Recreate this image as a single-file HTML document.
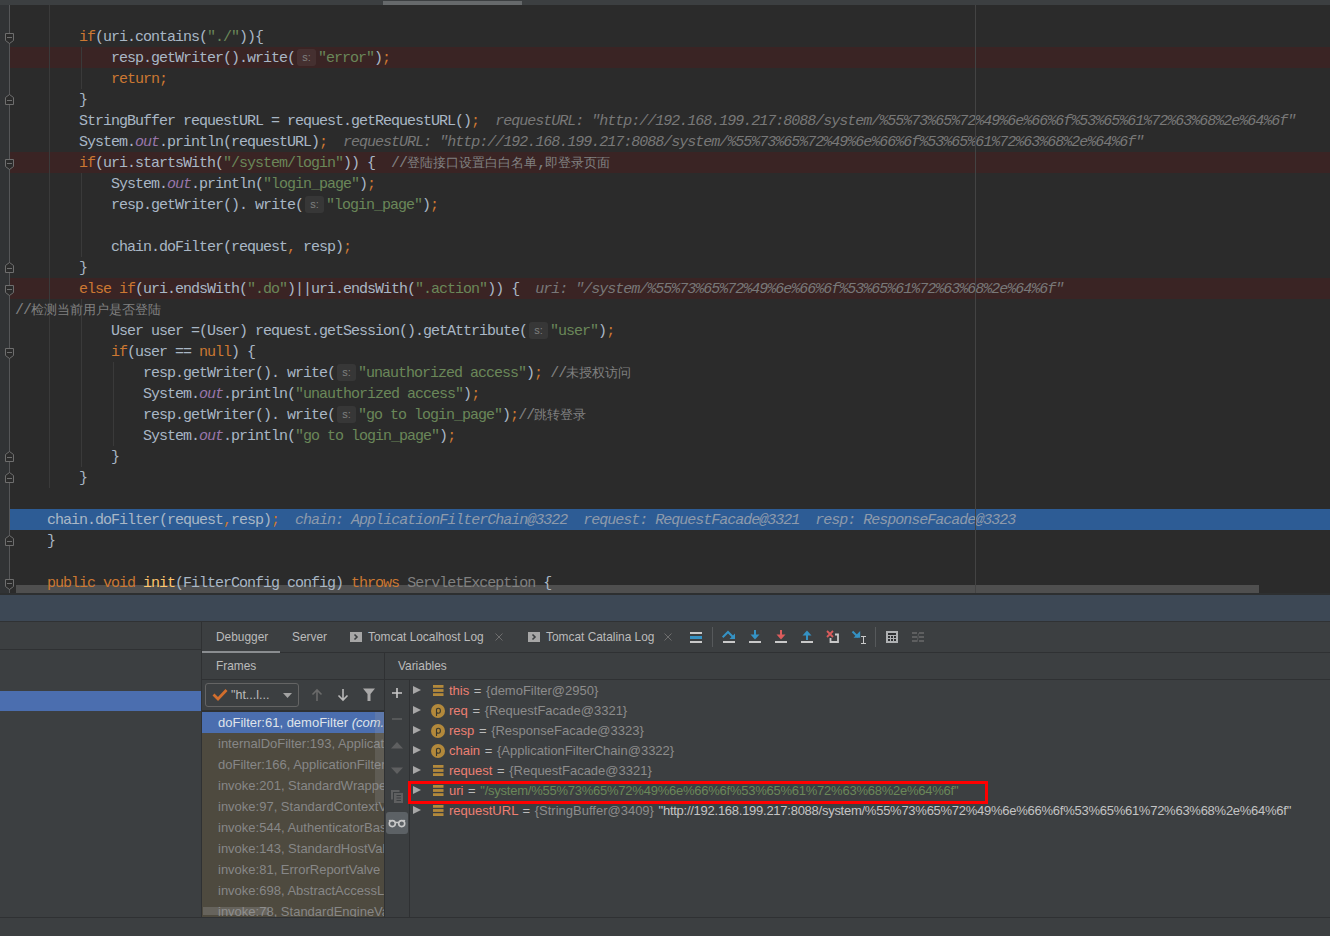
<!DOCTYPE html>
<html><head><meta charset="utf-8"><title>IDE Debugger</title><style>
*{margin:0;padding:0;box-sizing:border-box}
html,body{width:1330px;height:936px;overflow:hidden;background:#3c3f41}
body{position:relative;font-family:"Liberation Sans",sans-serif}
.abs{position:absolute}
#topbar{position:absolute;left:0;top:0;width:1330px;height:5px;background:#3c3f41}
#topthumb{position:absolute;left:383px;top:1px;width:139px;height:4px;background:#66696b}
#editor{position:absolute;left:0;top:5px;width:1330px;height:589px;background:#2b2b2b;overflow:hidden}
#code{position:absolute;left:0;top:-5px;width:1330px;height:600px}
#gutter{position:absolute;left:0;top:5px;width:9px;height:589px;background:#313335}
#gutline{position:absolute;left:9px;top:5px;width:1px;height:589px;background:#555658}
.fold{position:absolute;left:0}
#margin{position:absolute;left:975px;top:5px;width:1px;height:589px;background:#434343}
.hl{position:absolute;left:10px;width:1320px;height:21px}
.red{background:#3a2424}
.blue{background:#2d5c95}
.guide{position:absolute;width:1px;background:#3a3a3a}
.ln{position:absolute;left:15px;height:21px;line-height:21px;white-space:pre;font-family:"Liberation Mono",monospace;font-size:15px;letter-spacing:-1px;color:#a9b7c6}
.ln span{}
.k{color:#cc7832}
.s{color:#6a8759}
.d{color:#a9b7c6}
.c{color:#808080}
.cjkc{color:#808080;font-size:13px;letter-spacing:0}
.f{color:#9876aa;font-style:italic}
.m{color:#ffc66d}
.g{color:#808080}
.iv{color:#787878;font-style:italic}
.ivb{color:#8d9aab;font-style:italic}
.hint{display:inline-block;width:23px;height:21px;position:relative;vertical-align:top}
.hint b{position:absolute;left:2px;top:1px;width:19px;height:17px;border-radius:3px;background:rgba(255,255,255,0.06);font-weight:normal;font-family:"Liberation Sans",sans-serif;font-size:11px;letter-spacing:0;line-height:17px;text-align:center;color:#7f7f7f}
#hscroll{position:absolute;left:16px;top:585px;width:1243px;height:8px;background:#4f4f4f}
#band{position:absolute;left:0;top:593px;width:1330px;height:2px;background:#2d2f30}
#band2{position:absolute;left:0;top:595px;width:1330px;height:26px;background:#3d4855}
#band3{position:absolute;left:0;top:621px;width:1330px;height:1px;background:#303234}
.hline{position:absolute;height:1px;background:#2f3133}
.vline{position:absolute;width:1px;background:#2f3133}
.ui{position:absolute;font-family:"Liberation Sans",sans-serif;font-size:11.9px;color:#bbbbbb;white-space:pre;line-height:16px}
.frame{position:absolute;left:16px;height:21px;line-height:21px;font-size:13px;color:#878787;white-space:pre;font-family:"Liberation Sans",sans-serif}
.var{position:absolute;left:449px;height:20px;line-height:20px;font-size:13px;word-spacing:1px;white-space:pre;font-family:"Liberation Sans",sans-serif;color:#bbbbbb}
.vn{color:#ec7f73}
.vv{color:#8c8c8c}
.vs{color:#6a8759;letter-spacing:-0.24px}
.vp{letter-spacing:-0.26px;color:#c4c4c4}
.tri{position:absolute;left:413px;width:0;height:0;border-left:8px solid #a7a7a7;border-top:4.5px solid transparent;border-bottom:4.5px solid transparent}
.fld{position:absolute;left:433px;width:10px;height:11px}
.pic{position:absolute;left:431px;width:14px;height:14px;border-radius:50%;background:#b38c3e;color:#2b2b2b;font-size:11px;line-height:13px;text-align:center;font-family:"Liberation Sans",sans-serif}

</style></head><body>
<div id="topbar"></div><div id="topthumb"></div>
<div id="editor"><div id="code">
<div id="hscroll"></div>
<div class="hl red" style="top:47px"></div>
<div class="hl red" style="top:152px"></div>
<div class="hl red" style="top:278px"></div>
<div class="hl blue" style="top:509px"></div>
<div class="guide" style="left:49px;top:5px;height:483px"></div>
<div class="guide" style="left:81px;top:47px;height:42px"></div>
<div class="guide" style="left:81px;top:173px;height:84px"></div>
<div class="guide" style="left:81px;top:299px;height:168px"></div>
<div class="guide" style="left:113px;top:362px;height:84px"></div>
<div class="ln" style="top:27px"><span class="d">        </span><span class="k">if</span><span class="d">(uri.contains(</span><span class="s">&quot;./&quot;</span><span class="d">)){</span></div>
<div class="ln" style="top:48px"><span class="d">            resp.getWriter().write(</span><span class="hint"><b>s:</b></span><span class="s">&quot;error&quot;</span><span class="d">)</span><span class="k">;</span></div>
<div class="ln" style="top:69px"><span class="d">            </span><span class="k">return;</span></div>
<div class="ln" style="top:90px"><span class="d">        }</span></div>
<div class="ln" style="top:111px"><span class="d">        StringBuffer requestURL = request.getRequestURL()</span><span class="k">;</span><span class="d">  </span><span class="iv">requestURL: &quot;http://192.168.199.217:8088/system/%55%73%65%72%49%6e%66%6f%53%65%61%72%63%68%2e%64%6f&quot;</span></div>
<div class="ln" style="top:132px"><span class="d">        System.</span><span class="f">out</span><span class="d">.println(requestURL)</span><span class="k">;</span><span class="d">  </span><span class="iv">requestURL: &quot;http://192.168.199.217:8088/system/%55%73%65%72%49%6e%66%6f%53%65%61%72%63%68%2e%64%6f&quot;</span></div>
<div class="ln" style="top:153px"><span class="d">        </span><span class="k">if</span><span class="d">(uri.startsWith(</span><span class="s">&quot;/system/login&quot;</span><span class="d">)) {  </span><span class="c">//</span><span class="cjkc">登陆接口设置白白名单</span><span class="c">,</span><span class="cjkc">即登录页面</span></div>
<div class="ln" style="top:174px"><span class="d">            System.</span><span class="f">out</span><span class="d">.println(</span><span class="s">&quot;login_page&quot;</span><span class="d">)</span><span class="k">;</span></div>
<div class="ln" style="top:195px"><span class="d">            resp.getWriter(). write(</span><span class="hint"><b>s:</b></span><span class="s">&quot;login_page&quot;</span><span class="d">)</span><span class="k">;</span></div>
<div class="ln" style="top:237px"><span class="d">            chain.doFilter(request</span><span class="k">,</span><span class="d"> resp)</span><span class="k">;</span></div>
<div class="ln" style="top:258px"><span class="d">        }</span></div>
<div class="ln" style="top:279px"><span class="d">        </span><span class="k">else if</span><span class="d">(uri.endsWith(</span><span class="s">&quot;.do&quot;</span><span class="d">)||uri.endsWith(</span><span class="s">&quot;.action&quot;</span><span class="d">)) {  </span><span class="iv">uri: &quot;/system/%55%73%65%72%49%6e%66%6f%53%65%61%72%63%68%2e%64%6f&quot;</span></div>
<div class="ln" style="top:300px"><span class="c">//</span><span class="cjkc">检测当前用户是否登陆</span></div>
<div class="ln" style="top:321px"><span class="d">            User user =(User) request.getSession().getAttribute(</span><span class="hint"><b>s:</b></span><span class="s">&quot;user&quot;</span><span class="d">)</span><span class="k">;</span></div>
<div class="ln" style="top:342px"><span class="d">            </span><span class="k">if</span><span class="d">(user == </span><span class="k">null</span><span class="d">) {</span></div>
<div class="ln" style="top:363px"><span class="d">                resp.getWriter(). write(</span><span class="hint"><b>s:</b></span><span class="s">&quot;unauthorized access&quot;</span><span class="d">)</span><span class="k">;</span><span class="d"> </span><span class="c">//</span><span class="cjkc">未授权访问</span></div>
<div class="ln" style="top:384px"><span class="d">                System.</span><span class="f">out</span><span class="d">.println(</span><span class="s">&quot;unauthorized access&quot;</span><span class="d">)</span><span class="k">;</span></div>
<div class="ln" style="top:405px"><span class="d">                resp.getWriter(). write(</span><span class="hint"><b>s:</b></span><span class="s">&quot;go to login_page&quot;</span><span class="d">)</span><span class="k">;</span><span class="c">//</span><span class="cjkc">跳转登录</span></div>
<div class="ln" style="top:426px"><span class="d">                System.</span><span class="f">out</span><span class="d">.println(</span><span class="s">&quot;go to login_page&quot;</span><span class="d">)</span><span class="k">;</span></div>
<div class="ln" style="top:447px"><span class="d">            }</span></div>
<div class="ln" style="top:468px"><span class="d">        }</span></div>
<div class="ln" style="top:510px"><span class="d">    chain.doFilter(request</span><span class="k">,</span><span class="d">resp)</span><span class="k">;</span><span class="d">  </span><span class="ivb">chain: ApplicationFilterChain@3322  request: RequestFacade@3321  resp: ResponseFacade@3323</span></div>
<div class="ln" style="top:531px"><span class="d">    }</span></div>
<div class="ln" style="top:573px"><span class="d">    </span><span class="k">public void </span><span class="m">init</span><span class="d">(FilterConfig config) </span><span class="k">throws </span><span class="g">ServletException</span><span class="d"> {</span></div>
</div></div>
<div id="gutter"></div><div id="gutline"></div>
<svg class="fold" style="top:26px" width="20" height="21" viewBox="0 0 20 21"><path d="M5.5 7.5H13.5V14.5L9.5 17.5L5.5 14.5Z" fill="#2b2b2b" stroke="#6e6e6e" stroke-width="1"/><path d="M7 11.5H12" stroke="#6e6e6e" stroke-width="1"/></svg>
<svg class="fold" style="top:152px" width="20" height="21" viewBox="0 0 20 21"><path d="M5.5 7.5H13.5V14.5L9.5 17.5L5.5 14.5Z" fill="#2b2b2b" stroke="#6e6e6e" stroke-width="1"/><path d="M7 11.5H12" stroke="#6e6e6e" stroke-width="1"/></svg>
<svg class="fold" style="top:278px" width="20" height="21" viewBox="0 0 20 21"><path d="M5.5 7.5H13.5V14.5L9.5 17.5L5.5 14.5Z" fill="#2b2b2b" stroke="#6e6e6e" stroke-width="1"/><path d="M7 11.5H12" stroke="#6e6e6e" stroke-width="1"/></svg>
<svg class="fold" style="top:341px" width="20" height="21" viewBox="0 0 20 21"><path d="M5.5 7.5H13.5V14.5L9.5 17.5L5.5 14.5Z" fill="#2b2b2b" stroke="#6e6e6e" stroke-width="1"/><path d="M7 11.5H12" stroke="#6e6e6e" stroke-width="1"/></svg>
<svg class="fold" style="top:572px" width="20" height="21" viewBox="0 0 20 21"><path d="M5.5 7.5H13.5V14.5L9.5 17.5L5.5 14.5Z" fill="#2b2b2b" stroke="#6e6e6e" stroke-width="1"/><path d="M7 11.5H12" stroke="#6e6e6e" stroke-width="1"/></svg>
<svg class="fold" style="top:89px" width="20" height="21" viewBox="0 0 20 21"><path d="M5.5 15.5H13.5V8.5L9.5 5.5L5.5 8.5Z" fill="#2b2b2b" stroke="#6e6e6e" stroke-width="1"/><path d="M7 11.5H12" stroke="#6e6e6e" stroke-width="1"/></svg>
<svg class="fold" style="top:257px" width="20" height="21" viewBox="0 0 20 21"><path d="M5.5 15.5H13.5V8.5L9.5 5.5L5.5 8.5Z" fill="#2b2b2b" stroke="#6e6e6e" stroke-width="1"/><path d="M7 11.5H12" stroke="#6e6e6e" stroke-width="1"/></svg>
<svg class="fold" style="top:446px" width="20" height="21" viewBox="0 0 20 21"><path d="M5.5 15.5H13.5V8.5L9.5 5.5L5.5 8.5Z" fill="#2b2b2b" stroke="#6e6e6e" stroke-width="1"/><path d="M7 11.5H12" stroke="#6e6e6e" stroke-width="1"/></svg>
<svg class="fold" style="top:467px" width="20" height="21" viewBox="0 0 20 21"><path d="M5.5 15.5H13.5V8.5L9.5 5.5L5.5 8.5Z" fill="#2b2b2b" stroke="#6e6e6e" stroke-width="1"/><path d="M7 11.5H12" stroke="#6e6e6e" stroke-width="1"/></svg>
<svg class="fold" style="top:530px" width="20" height="21" viewBox="0 0 20 21"><path d="M5.5 15.5H13.5V8.5L9.5 5.5L5.5 8.5Z" fill="#2b2b2b" stroke="#6e6e6e" stroke-width="1"/><path d="M7 11.5H12" stroke="#6e6e6e" stroke-width="1"/></svg>
<div id="margin"></div>
<div id="band"></div><div id="band2"></div><div id="band3"></div>

<!-- left panel -->
<div class="hline" style="left:0;top:649px;width:201px"></div>
<div class="abs" style="left:0;top:691px;width:201px;height:20px;background:#4b6eaf"></div>
<div class="vline" style="left:201px;top:622px;height:295px"></div>

<!-- tabs -->
<div class="ui" style="left:216px;top:629px">Debugger</div>
<div class="ui" style="left:292px;top:629px">Server</div>
<svg class="abs" style="left:350px;top:632px" width="12" height="10"><rect width="12" height="10" fill="#a6a6a6"/><path d="M4.5 2.5L7 5L4.5 7.5" stroke="#3c3f41" stroke-width="1.6" fill="none"/></svg>
<div class="ui" style="left:368px;top:629px">Tomcat Localhost Log</div>
<svg class="abs" style="left:495px;top:633px" width="8" height="8"><path d="M0.5 0.5L7.5 7.5M7.5 0.5L0.5 7.5" stroke="#6e6e6e" stroke-width="1"/></svg>
<svg class="abs" style="left:528px;top:632px" width="12" height="10"><rect width="12" height="10" fill="#a6a6a6"/><path d="M4.5 2.5L7 5L4.5 7.5" stroke="#3c3f41" stroke-width="1.6" fill="none"/></svg>
<div class="ui" style="left:546px;top:629px">Tomcat Catalina Log</div>
<svg class="abs" style="left:664px;top:633px" width="8" height="8"><path d="M0.5 0.5L7.5 7.5M7.5 0.5L0.5 7.5" stroke="#6e6e6e" stroke-width="1"/></svg>
<div class="hline" style="left:202px;top:652px;width:1128px"></div>
<div class="abs" style="left:202px;top:651px;width:78px;height:2px;background:#8a8d90"></div>

<!-- frames header -->
<div class="ui" style="left:216px;top:658px">Frames</div>
<div class="ui" style="left:398px;top:658px">Variables</div>
<div class="hline" style="left:202px;top:679px;width:1128px"></div>
<div class="vline" style="left:384px;top:653px;height:264px"></div>

<!-- frames -->
<div class="abs" style="left:205px;top:683px;width:94px;height:24px;border:1px solid #646464;border-radius:3px"></div>
<div class="abs" style="left:202px;top:710px;width:182px;height:2px;background:#2f3133"></div>
<div class="abs" style="left:202px;top:712px;width:182px;height:205px;background:#4e4a3f;overflow:hidden">
<div class="abs" style="left:0;top:0px;width:182px;height:21px;background:#4b6eaf"></div>
<div class="frame" style="top:0px;color:#dfe3ea">doFilter:61, demoFilter <i>(com.intellij</i></div>
<div class="frame" style="top:21px">internalDoFilter:193, ApplicationFilterChain</div>
<div class="frame" style="top:42px">doFilter:166, ApplicationFilterChain</div>
<div class="frame" style="top:63px">invoke:201, StandardWrapperValve</div>
<div class="frame" style="top:84px">invoke:97, StandardContextValve</div>
<div class="frame" style="top:105px">invoke:544, AuthenticatorBase</div>
<div class="frame" style="top:126px">invoke:143, StandardHostValve</div>
<div class="frame" style="top:147px">invoke:81, ErrorReportValve</div>
<div class="frame" style="top:168px">invoke:698, AbstractAccessLogValve</div>
<div class="frame" style="top:189px">invoke:78, StandardEngineValve</div>
<div class="abs" style="left:173px;top:0;width:9px;height:91px;background:rgba(160,160,160,0.22)"></div>
<div class="abs" style="left:1px;top:195px;width:66px;height:8px;background:rgba(160,160,160,0.3)"></div>
</div>

<!-- variables toolbar -->
<div class="vline" style="left:409px;top:680px;height:237px"></div>

<!-- variables -->
<div class="tri" style="top:686px"></div><div class="tri" style="top:706px"></div><div class="tri" style="top:726px"></div><div class="tri" style="top:746px"></div><div class="tri" style="top:766px"></div><div class="tri" style="top:786px"></div><div class="tri" style="top:806px"></div>
<svg class="abs" style="left:433px;top:685px" width="11" height="11" viewBox="0 0 11 11"><rect x="0" y="0" width="10.5" height="2.8" fill="#b3893b"/><rect x="0" y="4.1" width="10.5" height="2.8" fill="#b3893b"/><rect x="0" y="8.2" width="10.5" height="2.8" fill="#b3893b"/></svg>
<svg class="abs" style="left:431px;top:704px" width="14" height="14" viewBox="0 0 14 14"><circle cx="7" cy="7" r="7" fill="#b3893b"/><path d="M5.5 12V4.5M5.5 5.5C6 4.6 6.8 4.3 7.4 4.3C8.8 4.3 9.4 5.4 9.4 6.8C9.4 8.2 8.8 9.3 7.4 9.3C6.7 9.3 6 9 5.5 8" stroke="#3a3a2e" stroke-width="1.1" fill="none"/></svg>
<svg class="abs" style="left:431px;top:724px" width="14" height="14" viewBox="0 0 14 14"><circle cx="7" cy="7" r="7" fill="#b3893b"/><path d="M5.5 12V4.5M5.5 5.5C6 4.6 6.8 4.3 7.4 4.3C8.8 4.3 9.4 5.4 9.4 6.8C9.4 8.2 8.8 9.3 7.4 9.3C6.7 9.3 6 9 5.5 8" stroke="#3a3a2e" stroke-width="1.1" fill="none"/></svg>
<svg class="abs" style="left:431px;top:744px" width="14" height="14" viewBox="0 0 14 14"><circle cx="7" cy="7" r="7" fill="#b3893b"/><path d="M5.5 12V4.5M5.5 5.5C6 4.6 6.8 4.3 7.4 4.3C8.8 4.3 9.4 5.4 9.4 6.8C9.4 8.2 8.8 9.3 7.4 9.3C6.7 9.3 6 9 5.5 8" stroke="#3a3a2e" stroke-width="1.1" fill="none"/></svg>
<svg class="abs" style="left:433px;top:765px" width="11" height="11" viewBox="0 0 11 11"><rect x="0" y="0" width="10.5" height="2.8" fill="#b3893b"/><rect x="0" y="4.1" width="10.5" height="2.8" fill="#b3893b"/><rect x="0" y="8.2" width="10.5" height="2.8" fill="#b3893b"/></svg>
<svg class="abs" style="left:433px;top:785px" width="11" height="11" viewBox="0 0 11 11"><rect x="0" y="0" width="10.5" height="2.8" fill="#b3893b"/><rect x="0" y="4.1" width="10.5" height="2.8" fill="#b3893b"/><rect x="0" y="8.2" width="10.5" height="2.8" fill="#b3893b"/></svg>
<svg class="abs" style="left:433px;top:805px" width="11" height="11" viewBox="0 0 11 11"><rect x="0" y="0" width="10.5" height="2.8" fill="#b3893b"/><rect x="0" y="4.1" width="10.5" height="2.8" fill="#b3893b"/><rect x="0" y="8.2" width="10.5" height="2.8" fill="#b3893b"/></svg>
<div class="var" style="top:681px"><span class="vn">this</span> = <span class="vv">{demoFilter@2950}</span></div>
<div class="var" style="top:701px"><span class="vn">req</span> = <span class="vv">{RequestFacade@3321}</span></div>
<div class="var" style="top:721px"><span class="vn">resp</span> = <span class="vv">{ResponseFacade@3323}</span></div>
<div class="var" style="top:741px"><span class="vn">chain</span> = <span class="vv">{ApplicationFilterChain@3322}</span></div>
<div class="var" style="top:761px"><span class="vn">request</span> = <span class="vv">{RequestFacade@3321}</span></div>
<div class="var" style="top:781px"><span class="vn">uri</span> = <span class="vs">"/system/%55%73%65%72%49%6e%66%6f%53%65%61%72%63%68%2e%64%6f"</span></div>
<div class="var" style="top:801px"><span class="vn">requestURL</span> = <span class="vv">{StringBuffer@3409}</span> <span class="vp">"http://192.168.199.217:8088/system/%55%73%65%72%49%6e%66%6f%53%65%61%72%63%68%2e%64%6f"</span></div>
<div class="abs" style="left:408px;top:781px;width:580px;height:23px;border:3px solid #ff0000"></div>

<div class="hline" style="left:0;top:917px;width:1330px"></div>

<!-- debugger toolbar -->
<svg class="abs" style="left:680px;top:622px" width="260" height="30" viewBox="680 622 260 30">
 <rect x="690" y="632" width="12" height="2" fill="#c9c9c9"/>
 <rect x="690" y="636" width="12" height="3" fill="#3592c4"/>
 <rect x="690" y="641" width="12" height="2" fill="#c9c9c9"/>
 <rect x="712" y="627" width="1" height="20" fill="#56595b"/>
 <path d="M722.7 637.3L728 632L733 637" stroke="#3592c4" stroke-width="2" fill="none"/>
 <path d="M735 633.5V639H729.5Z" fill="#3592c4"/>
 <rect x="723" y="641" width="12" height="2" fill="#c9c9c9"/>
 <rect x="754" y="630" width="2" height="6" fill="#3592c4"/>
 <path d="M750.5 634.5H759.5L755 639.5Z" fill="#3592c4"/>
 <rect x="749" y="641" width="12" height="2" fill="#c9c9c9"/>
 <rect x="780" y="630" width="2" height="6" fill="#db5c5c"/>
 <path d="M776.5 634.5H785.5L781 639.5Z" fill="#db5c5c"/>
 <rect x="775" y="641" width="12" height="2" fill="#c9c9c9"/>
 <path d="M802.5 635.5H811.5L807 630.5Z" fill="#3592c4"/>
 <rect x="806" y="635" width="2" height="5" fill="#3592c4"/>
 <rect x="801" y="641" width="12" height="2" fill="#c9c9c9"/>
 <path d="M827 631L833 637M833 631L827 637" stroke="#db5c5c" stroke-width="1.8"/>
 <path d="M835 634.5H838V642H830.5V638" stroke="#c9c9c9" stroke-width="1.8" fill="none"/>
 <path d="M852.5 631.5L858 637" stroke="#3592c4" stroke-width="2"/>
 <path d="M853.5 637.8H860.2V631Z" fill="#3592c4"/>
 <path d="M861 636.5H866M863.5 636.5V643.5M861 643.5H866" stroke="#c9c9c9" stroke-width="1"/>
 <rect x="875" y="627" width="1" height="20" fill="#56595b"/>
 <rect x="886" y="631" width="12" height="12" fill="#afb1b3"/>
 <path d="M888 633h8v2h-8zM888 636h2v2h-2zM891 636h2v2h-2zM894 636h2v2h-2zM888 639h2v2h-2zM891 639h2v2h-2zM894 639h2v2h-2z" fill="#2e3032"/>
 <path d="M912 632h5v2h-5zM912 636h5v2h-5zM912 640h5v2h-5zM919 632h5v2h-5zM919 636h5v2h-5zM919 640h5v2h-5z" fill="#5e5f60"/>
 <path d="M919.5 632.5C917.5 634 918.5 638 917 642" stroke="#5e5f60" stroke-width="0.9" fill="none"/>
</svg>

<!-- combo -->
<svg class="abs" style="left:205px;top:683px" width="94" height="24" viewBox="205 683 94 24">
 <path d="M213.5 694.5L218 699L226.5 690" stroke="#d26e2d" stroke-width="2.8" fill="none"/>
 <path d="M283 693H292L287.5 698Z" fill="#a3a3a3"/>
</svg>
<div class="ui" style="left:231px;top:687px;color:#bbbbbb;font-size:12.5px">"ht...l...</div>
<!-- frames toolbar -->
<svg class="abs" style="left:305px;top:684px" width="80" height="24" viewBox="305 684 80 24">
 <path d="M317 701V690M312.5 694.5L317 690L321.5 694.5" stroke="#6a6a6a" stroke-width="1.6" fill="none"/>
 <path d="M343 689V700M338.5 695.5L343 700L347.5 695.5" stroke="#b9b9b9" stroke-width="1.6" fill="none"/>
 <path d="M363 688.5H375L370.5 694V701H367.5V694Z" fill="#a9a9a9"/>
</svg>
<!-- variables toolbar -->
<svg class="abs" style="left:385px;top:680px" width="24" height="237" viewBox="385 680 24 237">
 <path d="M397 688V698M392 693H402" stroke="#c9c9c9" stroke-width="1.6"/>
 <path d="M392 719H402" stroke="#5e5f60" stroke-width="1.6"/>
 <path d="M391 748.5L397 742L403 748.5Z" fill="#5e5f60"/>
 <path d="M391 767.5L397 774L403 767.5Z" fill="#5e5f60"/>
 <path d="M392 799.5V791H399.5" stroke="#5e5f60" stroke-width="2" fill="none"/>
 <rect x="394" y="793" width="9" height="10" fill="#5e5f60"/>
 <path d="M396.5 795.5h4.5M396.5 798h4.5M396.5 800.5h4.5" stroke="#3c3f41" stroke-width="1.2"/>
 <rect x="386" y="812" width="22" height="22" rx="3" fill="#5c6165"/>
 <circle cx="392.3" cy="823.6" r="3" stroke="#c9c9c9" stroke-width="1.6" fill="none"/>
 <circle cx="401.7" cy="823.6" r="3" stroke="#c9c9c9" stroke-width="1.6" fill="none"/>
 <path d="M389 821L390.5 820M395.5 822.5H398.5M405 821L403.5 820" stroke="#c9c9c9" stroke-width="1.4"/>
</svg>

</body></html>
